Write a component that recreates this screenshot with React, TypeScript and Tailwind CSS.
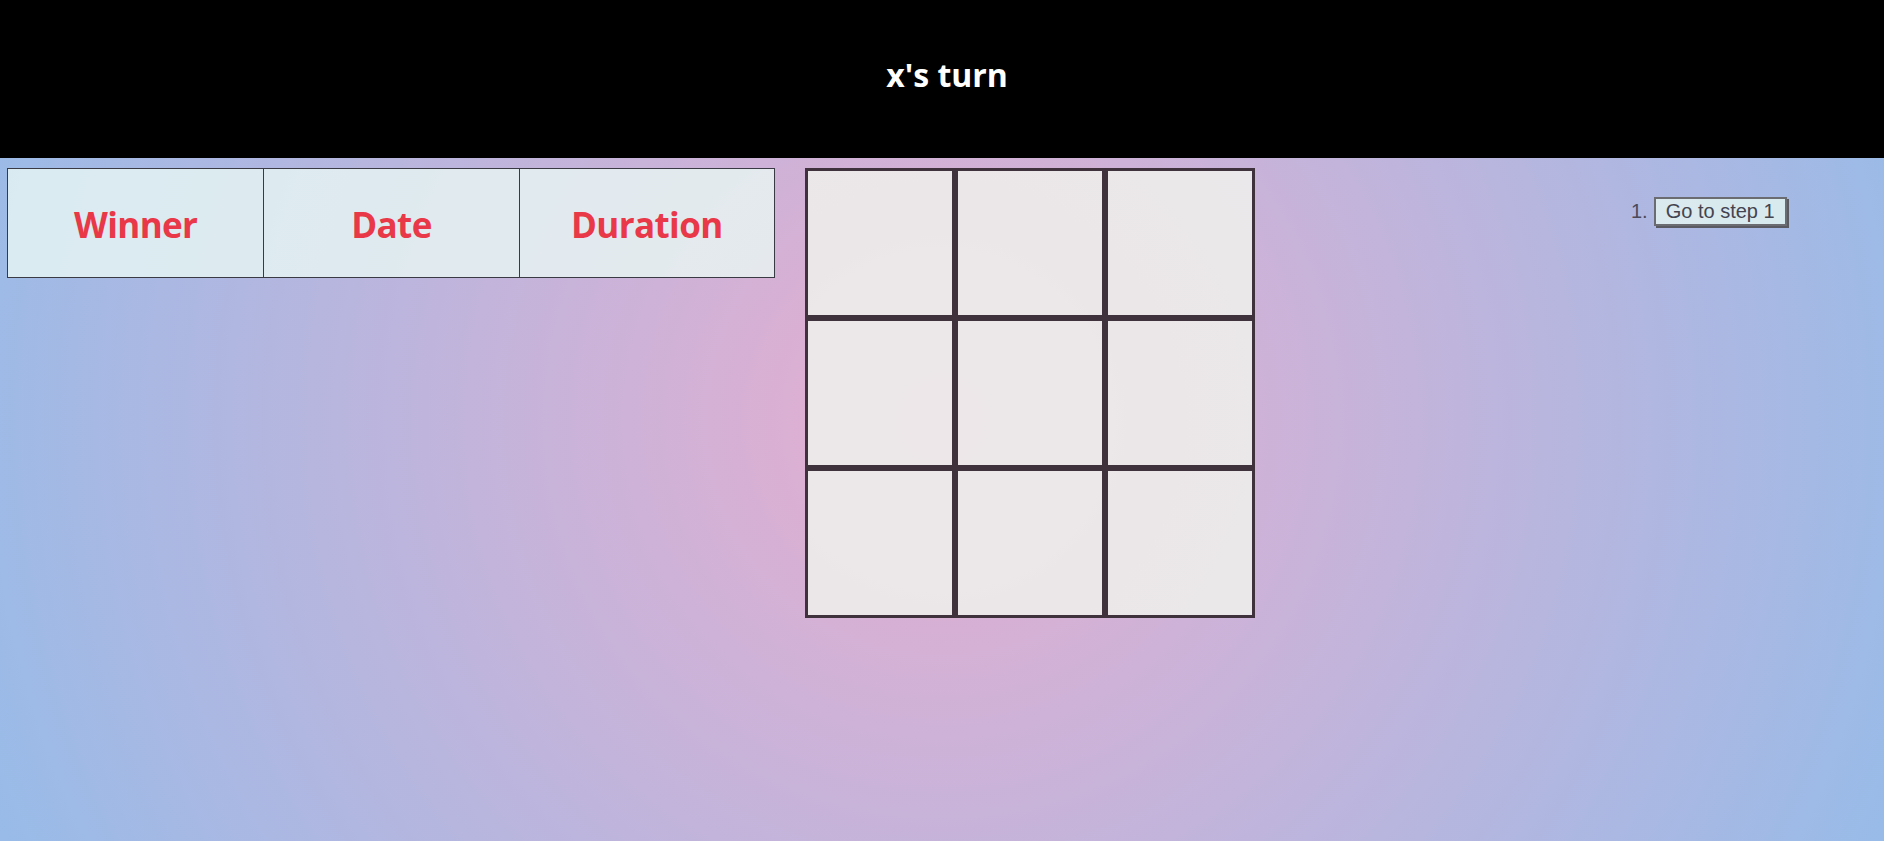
import { useState } from 'react';

export default function App() {
  const [squares, setSquares] = useState<(string | null)[]>(Array(9).fill(null));
  const [xIsNext, setXIsNext] = useState(true);

  const handleClick = (i: number) => {
    if (squares[i]) return;
    const next = [...squares];
    next[i] = xIsNext ? 'x' : 'o';
    setSquares(next);
    setXIsNext(!xIsNext);
  };

  return (
    <div className='min-h-screen w-full bg-[radial-gradient(circle,#e6aed0,#98bbe8)] font-["Open_Sans",sans-serif]'>
      <header className='h-[158px] bg-black flex items-center justify-center pl-[10px] pb-[8px]'>
        <h1 className='text-white text-[32px] font-bold leading-none'>{xIsNext ? 'x' : 'o'}'s turn</h1>
      </header>

      <div className='flex items-start pt-[10px] pl-[7px]'>
        <div className='grid grid-cols-3 w-[768px] border border-[#3a3a44] bg-[#e8f8f4]/80'>
          {['Winner', 'Date', 'Duration'].map((h, i) => (
            <div
              key={h}
              className={`h-[108px] flex items-center justify-center pt-[4px] text-[35px] tracking-[-0.6px] font-bold text-[#e93848] ${i > 0 ? 'border-l border-[#3a3a44]' : ''}`}
            >
              {h}
            </div>
          ))}
        </div>

        <div className='ml-[30px] grid grid-cols-3 w-[450px]'>
          {squares.map((sq, i) => (
            <button
              key={i}
              onClick={() => handleClick(i)}
              className='w-[150px] h-[150px] border-[3px] border-[#3f323d] bg-[#ededeb]/90 text-[64px] font-bold text-[#3f323d]'
            >
              {sq}
            </button>
          ))}
        </div>

        <ol className='ml-[376px] mt-[28px] font-["Liberation_Sans",Arial,sans-serif] text-[20px] text-[#4a4a5a]'>
          <li className='flex items-center gap-[6px]'>
            <span>1.</span>
            <button
              onClick={() => { setSquares(Array(9).fill(null)); setXIsNext(true); }}
              className='h-[29px] px-[10px] leading-none border-2 border-[#6b6b72] bg-[#e2f2f0]/85 shadow-[2px_2px_0_#5a5a62] text-[#444450]'
            >
              Go to step 1
            </button>
          </li>
        </ol>
      </div>
    </div>
  );
}
